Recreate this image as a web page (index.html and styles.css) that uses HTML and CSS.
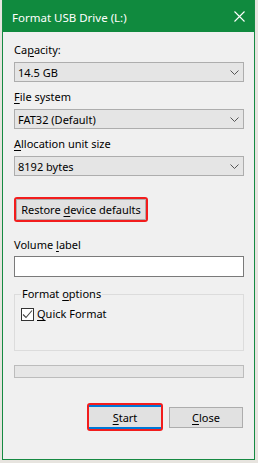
FILE: index.html
```html
<!DOCTYPE html>
<html lang="en">
<head>
    <meta charset="UTF-8">
    <title>Format USB Drive (L:)</title>
    <link rel="stylesheet" href="styles.css">
</head>
<body>
    <div class="dialog">
        <div class="titlebar">
            <span class="title">Format USB Drive (L:)</span>
            <svg class="close-x" width="11" height="11" viewBox="0 0 11 11">
                <path d="M0.5 0.5 L10.5 10.5 M10.5 0.5 L0.5 10.5" stroke="#fff" stroke-width="1.1" fill="none"/>
            </svg>
        </div>
        <div class="content">
            <div class="field">
                <span class="label">Ca<u>p</u>acity:</span>
                <div class="select"><span>14.5 GB</span>
                    <svg class="chev" width="9" height="5" viewBox="0 0 9 5"><path d="M0.5 0.5 L4.5 4.5 L8.5 0.5" stroke="#555" fill="none"/></svg>
                </div>
            </div>
            <div class="field">
                <span class="label"><u>F</u>ile system</span>
                <div class="select"><span>FAT32 (Default)</span>
                    <svg class="chev" width="9" height="5" viewBox="0 0 9 5"><path d="M0.5 0.5 L4.5 4.5 L8.5 0.5" stroke="#555" fill="none"/></svg>
                </div>
            </div>
            <div class="field">
                <span class="label"><u>A</u>llocation unit size</span>
                <div class="select"><span>8192 bytes</span>
                    <svg class="chev" width="9" height="5" viewBox="0 0 9 5"><path d="M0.5 0.5 L4.5 4.5 L8.5 0.5" stroke="#555" fill="none"/></svg>
                </div>
            </div>

            <div class="mark restore">
                <button class="btn">Restore <u>d</u>evice defaults</button>
            </div>

            <div class="field volume">
                <span class="label">Volume <u>l</u>abel</span>
                <div class="textbox"></div>
            </div>

            <fieldset class="options">
                <legend>Format <u>o</u>ptions</legend>
                <div class="check">
                    <span class="box">
                        <svg width="11" height="11" viewBox="0 0 11 11"><path d="M1 5.5 L4 8.5 L10 1.5" stroke="#444" stroke-width="1.1" fill="none"/></svg>
                    </span>
                    <span><u>Q</u>uick Format</span>
                </div>
            </fieldset>

            <div class="progress"></div>

            <div class="actions">
                <div class="mark start">
                    <button class="btn default"><u>S</u>tart</button>
                </div>
                <button class="btn close"><u>C</u>lose</button>
            </div>
        </div>
    </div>
</body>
</html>
```

FILE: styles.css
```css
*{
    margin: 0;
    padding: 0;
    box-sizing: border-box;
}
body{
    background-color: #e7e4df;
    font-family: "Noto Sans", "Liberation Sans", sans-serif;
    font-size: 11px;
    color: #000;
}
u{
    text-decoration: underline;
    text-underline-offset: 2px;
}
.dialog{
    width: 253px;
    height: 460px;
    margin-left: 2px;
    border: 1px solid #168a42;
    border-top: 0;
    background-color: #f0f0f0;
    display: flex;
    flex-direction: column;
}
.titlebar{
    height: 32px;
    background-color: #108a3e;
    color: #fff;
    display: flex;
    align-items: center;
    padding: 0 9px 0 9px;
    justify-content: space-between;
}
.title{
    font-size: 11.5px;
    padding-top: 3px;
}
.content{
    flex: 1;
    display: flex;
    flex-direction: column;
    padding: 10px 10px 0 11px;
}
.field{
    display: flex;
    flex-direction: column;
    gap: 4px;
    margin-bottom: 7px;
}
.label{
    line-height: 16px;
    height: 16px;
    white-space: nowrap;
}
.select{
    height: 20px;
    border: 1px solid #adadad;
    background-color: #e5e5e5;
    display: flex;
    align-items: center;
    justify-content: space-between;
    padding: 0 4px 0 3px;
}
.chev{
    margin-top: 1px;
}
.mark{
    border: 2px solid #f21d1d;
    border-radius: 3px;
    display: flex;
}
.restore{
    align-self: flex-start;
    margin-top: 14px;
    width: 134px;
    height: 25px;
}
.btn{
    font-family: inherit;
    font-size: 11px;
    color: #000;
    background-color: #e1e1e1;
    border: 1px solid #adadad;
    flex: 1;
    white-space: nowrap;
}
.volume{
    margin-top: 15px;
    gap: 3px;
    margin-bottom: 0;
}
.textbox{
    height: 21px;
    background-color: #fff;
    border: 1px solid #7a7a7a;
}
.options{
    margin-top: 9px;
    height: 65px;
    border: 1px solid #dcdcdc;
    padding: 4px 6px 0 6px;
}
.options legend{
    line-height: 16px;
    padding: 0 1px;
}
.check{
    display: flex;
    align-items: center;
    gap: 3px;
    line-height: 16px;
}
.box{
    width: 13px;
    height: 13px;
    border: 1px solid #333;
    background-color: #fff;
    display: flex;
}
.progress{
    margin-top: 14px;
    height: 13px;
    background-color: #e6e6e6;
    border: 1px solid #bcbcbc;
}
.actions{
    margin-top: 25px;
    display: flex;
    justify-content: flex-end;
    align-items: center;
    gap: 6px;
    padding-right: 1px;
}
.start{
    width: 76px;
    height: 28px;
}
.default{
    border: 0;
    border-top: 2px solid #0078d7;
    border-bottom: 2px solid #0078d7;
}
.close{
    flex: none;
    width: 74px;
    height: 21px;
}
```
